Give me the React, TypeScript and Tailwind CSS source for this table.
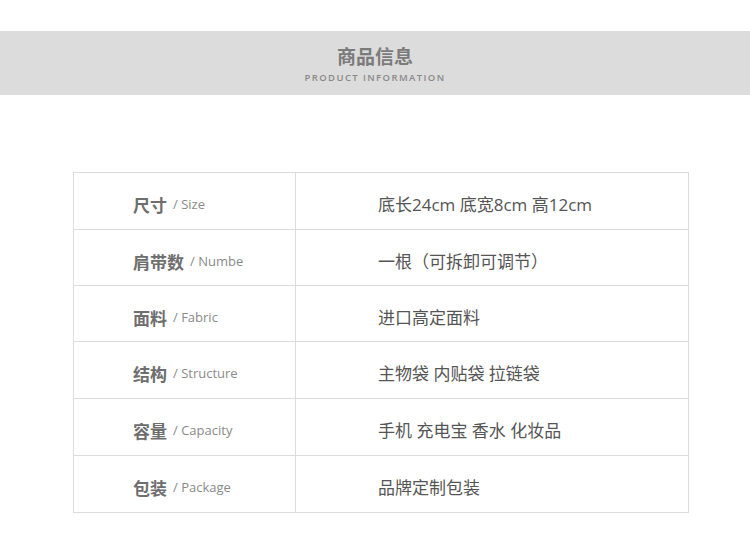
const rows = [
  { zh: "尺寸", en: "Size", value: "底长24cm 底宽8cm 高12cm", h: "h-[56px]" },
  { zh: "肩带数", en: "Numbe", value: "一根（可拆卸可调节）", h: "h-[56px]" },
  { zh: "面料", en: "Fabric", value: "进口高定面料", h: "h-[56px]" },
  { zh: "结构", en: "Structure", value: "主物袋 内贴袋 拉链袋", h: "h-[57px]" },
  { zh: "容量", en: "Capacity", value: "手机 充电宝 香水 化妆品", h: "h-[57px]" },
  { zh: "包装", en: "Package", value: "品牌定制包装", h: "h-[57px]" },
]

export default function App() {
  return (
    <div className="w-[750px] h-[550px] bg-white font-['Noto_Sans_CJK_SC',sans-serif] overflow-hidden">
      <div className="h-[31px]" />
      <div className="h-[64px] bg-[#dcdcdc] flex flex-col items-center pt-[11px]">
        <h1 className="text-[19px] leading-[28px] font-bold text-[#7b7b7b]">商品信息</h1>
        <p className="text-[9.5px] leading-[12px] mt-[2px] tracking-[1.4px] text-[#8a8a8a] font-['Open_Sans',sans-serif] font-semibold">
          PRODUCT INFORMATION
        </p>
      </div>

      <div className="mt-[77px] ml-[73px] w-[616px] border border-[#dcdcdc]">
        {rows.map((r, i) => (
          <div key={r.zh} className={"flex pt-[8px] " + r.h + (i > 0 ? " border-t border-[#dcdcdc]" : "")}>
            <div className="w-[222px] -mt-[8px] pt-[8px] border-r border-[#dcdcdc] flex items-center pl-[59px]">
              <span className="text-[17px] font-bold text-[#6e6e6e]">{r.zh}</span>
              <span className="ml-[6px] text-[13px] text-[#8a8a8a] font-['Open_Sans',sans-serif]">/ {r.en}</span>
            </div>
            <div className="flex-1 flex items-center pl-[82px] text-[17px] text-[#555] font-['Open_Sans','Noto_Sans_CJK_SC',sans-serif]">
              {r.value}
            </div>
          </div>
        ))}
      </div>
    </div>
  )
}
